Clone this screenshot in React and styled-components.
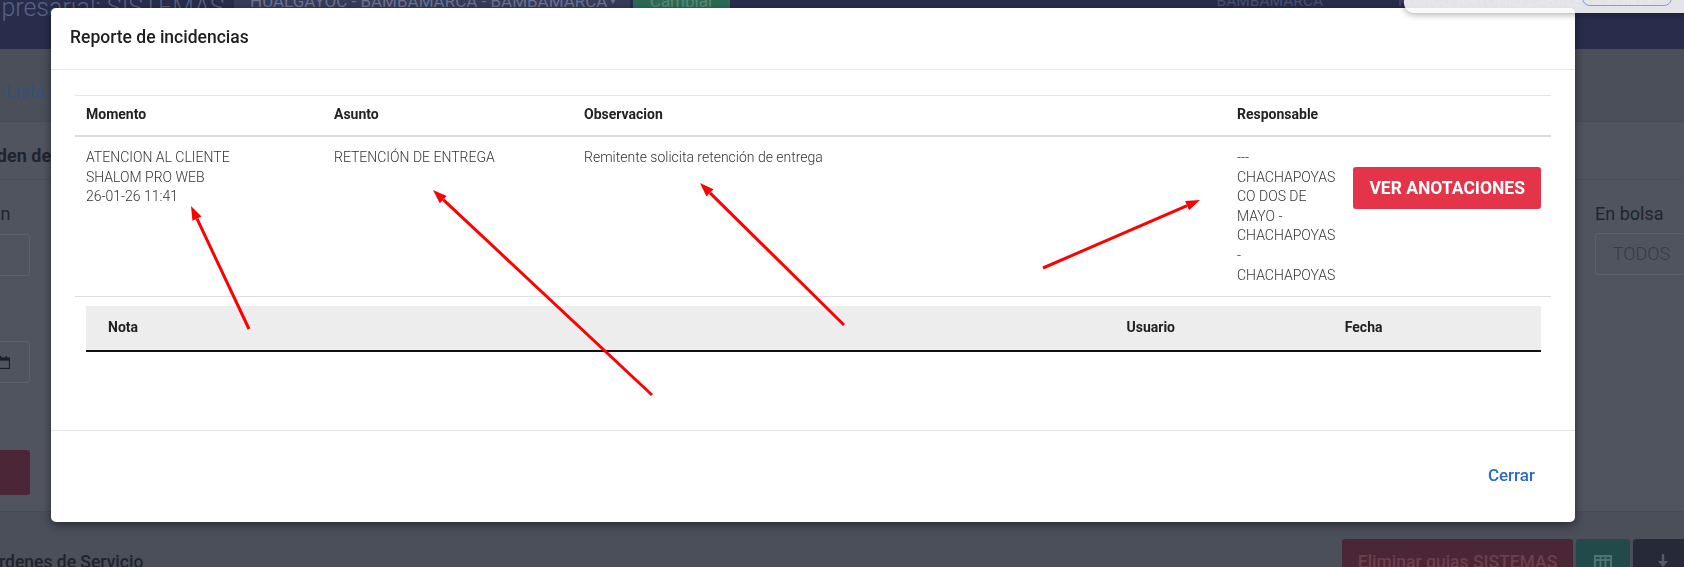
import styled, { createGlobalStyle } from "styled-components";

const GlobalStyle = createGlobalStyle`
    html, body {
        margin: 0;
        padding: 0;
        width: 1684px;
        height: 567px;
        overflow: hidden;
        background: #4b4f5a;
        font-family: Roboto, "Liberation Sans", sans-serif;
    }
    * { box-sizing: border-box; }
`

const arrows = [
    { x1: 249, y1: 329, x2: 191, y2: 206 },
    { x1: 652, y1: 395, x2: 433, y2: 190 },
    { x1: 844, y1: 325, x2: 700, y2: 183 },
    { x1: 1043, y1: 268, x2: 1200, y2: 200 },
];

function Arrow({ x1, y1, x2, y2 }) {
    const a = Math.atan2(y2 - y1, x2 - x1);
    const len = 14;
    const half = 5;
    const bx = x2 - len * Math.cos(a);
    const by = y2 - len * Math.sin(a);
    const px = -Math.sin(a) * half;
    const py = Math.cos(a) * half;
    return (
        <g>
            <line x1={x1} y1={y1} x2={bx} y2={by} stroke="#ff0000" strokeWidth="3" />
            <polygon points={`${x2},${y2} ${bx + px},${by + py} ${bx - px},${by - py}`} fill="#ff0000" />
        </g>
    )
}

export default function App() {
    return (
        <>
            <GlobalStyle />
            <Page>
                <Navbar>
                    <Brand>Empresarial: SISTEMAS</Brand>
                    <SedeSelect>HUALGAYOC - BAMBAMARCA - BAMBAMARCA <Caret>▼</Caret></SedeSelect>
                    <ChangeButton>Cambiar</ChangeButton>
                    <NavSpacer />
                    <NavItem $after={72}>BAMBAMARCA</NavItem>
                    <NavItem $after={29}>MARCO ANTONIO ZABALETA PONTE</NavItem>
                </Navbar>
                <Breadcrumb>Lista de Órdenes de Servicio</Breadcrumb>
                <FilterCard>
                    <CardTitle>Orden de Servicio</CardTitle>
                    <FilterRow $top={22}>
                        <LeftField>
                            <Label>Origen</Label>
                            <FakeInput />
                        </LeftField>
                        <RightField>
                            <Label>En bolsa</Label>
                            <FakeSelect>TODOS</FakeSelect>
                        </RightField>
                    </FilterRow>
                    <FilterRow $top={33}>
                        <LeftField>
                            <Label>Fin</Label>
                            <FakeInput>
                                <svg width="13" height="13" viewBox="0 0 13 13">
                                    <rect x="0.5" y="2" width="12" height="10.5" fill="none" stroke="#1c1f28" strokeWidth="1.2" />
                                    <rect x="0.5" y="2" width="12" height="2.6" fill="#1c1f28" />
                                    <rect x="3" y="0" width="1.4" height="3" fill="#1c1f28" />
                                    <rect x="8.6" y="0" width="1.4" height="3" fill="#1c1f28" />
                                </svg>
                            </FakeInput>
                        </LeftField>
                    </FilterRow>
                    <ButtonRow>
                        <SearchButton />
                    </ButtonRow>
                </FilterCard>
                <ListHeader>
                    <ListTitle>Órdenes de Servicio</ListTitle>
                    <ListActions>
                        <ActionButton $bg="#4a2636" $color="#6e3f4d" $width={231}>Eliminar guias SISTEMAS</ActionButton>
                        <ActionButton $bg="#224a4a" $color="#4f7472" $width={54}>
                            <svg width="18" height="14" viewBox="0 0 18 14">
                                <rect x="1" y="1" width="16" height="12" fill="none" stroke="#4f7472" strokeWidth="2" />
                                <line x1="1" y1="5" x2="17" y2="5" stroke="#4f7472" strokeWidth="2" />
                                <line x1="6.5" y1="1" x2="6.5" y2="13" stroke="#4f7472" strokeWidth="2" />
                                <line x1="11.5" y1="1" x2="11.5" y2="13" stroke="#4f7472" strokeWidth="2" />
                            </svg>
                        </ActionButton>
                        <ActionButton $bg="#262a38" $color="#555a6a" $width={60}>
                            <svg width="14" height="16" viewBox="0 0 14 16">
                                <line x1="7" y1="0" x2="7" y2="11" stroke="#555a6a" strokeWidth="2.4" />
                                <polygon points="2,7 12,7 7,13" fill="#555a6a" />
                            </svg>
                        </ActionButton>
                    </ListActions>
                </ListHeader>
            </Page>

            <UserMenu>
                <UserPill />
            </UserMenu>

            <Modal>
                <ModalHeader>
                    <ModalTitle>Reporte de incidencias</ModalTitle>
                </ModalHeader>
                <ModalBody>
                    <Table>
                        <colgroup>
                            <col style={{ width: 248 }} />
                            <col style={{ width: 250 }} />
                            <col style={{ width: 653 }} />
                            <col style={{ width: 122 }} />
                            <col />
                        </colgroup>
                        <thead>
                            <tr>
                                <Th>Momento</Th>
                                <Th>Asunto</Th>
                                <Th>Observacion</Th>
                                <Th>Responsable</Th>
                                <Th></Th>
                            </tr>
                        </thead>
                        <tbody>
                            <tr>
                                <Td>
                                    ATENCION AL CLIENTE<br />
                                    SHALOM PRO WEB<br />
                                    26-01-26 11:41
                                </Td>
                                <Td>RETENCIÓN DE ENTREGA</Td>
                                <Td>Remitente solicita retención de entrega</Td>
                                <Td>--- CHACHAPOYAS CO DOS DE MAYO - CHACHAPOYAS - CHACHAPOYAS</Td>
                                <ButtonCell>
                                    <NotesButton>VER ANOTACIONES</NotesButton>
                                </ButtonCell>
                            </tr>
                            <tr>
                                <NestedCell colSpan={5}>
                                    <NotesTable>
                                        <colgroup>
                                            <col />
                                            <col style={{ width: "15%" }} />
                                            <col style={{ width: "15%" }} />
                                        </colgroup>
                                        <thead>
                                            <tr>
                                                <NotesTh>Nota</NotesTh>
                                                <NotesTh>Usuario</NotesTh>
                                                <NotesTh>Fecha</NotesTh>
                                            </tr>
                                        </thead>
                                    </NotesTable>
                                </NestedCell>
                            </tr>
                        </tbody>
                    </Table>
                </ModalBody>
                <ModalFooter>
                    <CloseButton>Cerrar</CloseButton>
                </ModalFooter>
            </Modal>

            <Annotations viewBox="0 0 1684 567">
                {arrows.map((a, i) => <Arrow key={i} {...a} />)}
            </Annotations>
        </>
    )
}

const Page = styled.div`
    width: 1684px;
    height: 567px;
    overflow: hidden;
`

const Navbar = styled.div`
    height: 49px;
    background: #272d4b;
    display: flex;
    align-items: flex-start;
    gap: 3px;
    overflow: hidden;
`

const Brand = styled.div`
    flex: 0 0 266px;
    margin-top: -7px;
    margin-left: -35px;
    font-size: 25px;
    font-weight: 300;
    line-height: 30px;
    color: #5a6285;
    white-space: nowrap;
    overflow: hidden;
`

const SedeSelect = styled.div`
    margin-top: -14px;
    flex: 0 0 394px;
    height: 30px;
    padding: 0 12px 0 16px;
    background: #363c5a;
    color: #6d7393;
    font-size: 17px;
    line-height: 30px;
    display: flex;
    justify-content: space-between;
    white-space: nowrap;
`

const Caret = styled.span`
    font-size: 11px;
`

const ChangeButton = styled.div`
    margin-top: -14px;
    flex: 0 0 97px;
    height: 30px;
    background: #2d6a55;
    color: #5b8a79;
    font-size: 17px;
    line-height: 30px;
    text-align: center;
`

const NavSpacer = styled.div`
    flex: 1;
`

const NavItem = styled.div`
    margin-top: -11px;
    margin-right: ${p => p.$after}px;
    font-size: 15.5px;
    line-height: 24px;
    color: #4b5172;
    white-space: nowrap;
`

const UserMenu = styled.div`
    position: fixed;
    top: -10px;
    left: 1404px;
    width: 300px;
    height: 23px;
    border-radius: 10px;
    background: rgba(248, 248, 250, 0.9);
    box-shadow: 0 2px 6px rgba(0, 0, 0, 0.3);
    z-index: 30;
`

const UserPill = styled.div`
    position: absolute;
    left: 178px;
    top: 0;
    width: 90px;
    height: 16px;
    border: 1.5px solid #7b9ee0;
    border-radius: 8px;
`

const Breadcrumb = styled.div`
    height: 73px;
    padding: 31px 0 0 6px;
    font-size: 18px;
    line-height: 24px;
    color: #35507a;
    border-bottom: 1px solid #474b56;
    white-space: nowrap;
`

const FilterCard = styled.div`
    background: #50545f;
    border-bottom: 1px solid #474b56;
`

const CardTitle = styled.div`
    margin-left: -22px;
    padding: 23px 0 12px;
    font-size: 18px;
    font-weight: 700;
    line-height: 22px;
    color: #1f232d;
    border-bottom: 1px solid #4a4e59;
    white-space: nowrap;
`

const FilterRow = styled.div`
    display: flex;
    justify-content: space-between;
    padding-top: ${p => p.$top}px;
`

const LeftField = styled.div`
    width: 72px;
    margin-left: -42px;
    display: flex;
    flex-direction: column;
    gap: 8px;
`

const RightField = styled.div`
    width: 93px;
    margin-right: -4px;
    display: flex;
    flex-direction: column;
    gap: 7px;
`

const Label = styled.div`
    font-size: 18px;
    line-height: 24px;
    color: #20242e;
    white-space: nowrap;
`

const FakeInput = styled.div`
    height: 42px;
    border: 1px solid #5c606b;
    border-radius: 3px;
    display: flex;
    align-items: center;
    justify-content: flex-end;
    padding-right: 19px;
`

const FakeSelect = styled.div`
    height: 42px;
    border: 1px solid #5c606b;
    border-radius: 3px;
    font-size: 18px;
    font-weight: 300;
    line-height: 40px;
    text-align: center;
    color: #363a45;
`

const ButtonRow = styled.div`
    padding: 67px 0 16px;
`

const SearchButton = styled.div`
    width: 72px;
    height: 45px;
    margin-left: -42px;
    background: #4a2636;
    border-radius: 3px;
`

const ListHeader = styled.div`
    display: flex;
    justify-content: space-between;
    align-items: center;
    padding-top: 27px;
`

const ListTitle = styled.div`
    margin-left: -13px;
    font-size: 17.5px;
    font-weight: 500;
    color: #1f232d;
    white-space: nowrap;
`

const ListActions = styled.div`
    display: flex;
    gap: 3px;
    margin-right: -9px;
`

const ActionButton = styled.div`
    width: ${p => p.$width}px;
    height: 45px;
    background: ${p => p.$bg};
    color: ${p => p.$color};
    border-radius: 3px;
    font-size: 17.5px;
    font-weight: 500;
    display: flex;
    align-items: center;
    justify-content: center;
    white-space: nowrap;
`

const Modal = styled.div`
    position: fixed;
    top: 8px;
    left: 51px;
    width: 1524px;
    background: #ffffff;
    border-radius: 5px;
    box-shadow: 0 3px 10px rgba(0, 0, 0, 0.45);
    z-index: 10;
    color: #212529;
`

const ModalHeader = styled.div`
    padding: 17px 19px 20px;
    border-bottom: 1px solid #e6e6e6;
`

const ModalTitle = styled.div`
    font-size: 17.5px;
    font-weight: 500;
    line-height: 24px;
    color: #1e1e1e;
`

const ModalBody = styled.div`
    padding: 25px 24px 24px;
`

const Table = styled.table`
    width: 100%;
    table-layout: fixed;
    border-collapse: collapse;
    margin-bottom: 44px;
`

const Th = styled.th`
    padding: 9px 11px 10px;
    text-align: left;
    font-size: 14px;
    font-weight: 700;
    line-height: 19.6px;
    color: #222;
    border-top: 1px solid #e3e3ea;
    border-bottom: 2px solid #dcdcdc;
`

const Td = styled.td`
    padding: 11.5px 11px 11px;
    vertical-align: top;
    text-align: left;
    font-size: 14px;
    font-weight: 300;
    line-height: 19.6px;
    color: #333;
    border-bottom: 1px solid #dedede;
`

const ButtonCell = styled(Td)`
    padding-left: 0;
    padding-right: 10px;
    text-align: right;
    white-space: nowrap;
`

const NotesButton = styled.button`
    margin-top: 19px;
    padding: 11px 16px 10px;
    border: none;
    border-radius: 3px;
    background: #e3344a;
    color: #ffffff;
    font-family: Roboto, "Liberation Sans", sans-serif;
    font-size: 17.5px;
    font-weight: 700;
    line-height: 21px;
    white-space: nowrap;
    cursor: pointer;
`

const NestedCell = styled.td`
    padding: 9px 10px 10px 11px;
`

const NotesTable = styled.table`
    width: 100%;
    table-layout: fixed;
    border-collapse: collapse;
`

const NotesTh = styled.th`
    padding: 12px 22px;
    text-align: left;
    background: #ededed;
    font-size: 14px;
    font-weight: 700;
    line-height: 19.6px;
    color: #222;
    border-bottom: 2px solid #111;
`

const ModalFooter = styled.div`
    display: flex;
    justify-content: flex-end;
    padding: 24px 24px 27px;
    border-top: 1px solid #e6e6e6;
`

const CloseButton = styled.button`
    padding: 10px 16px;
    border: none;
    background: none;
    color: #2b6bc5;
    font-family: Roboto, "Liberation Sans", sans-serif;
    font-size: 17px;
    font-weight: 500;
    line-height: 20px;
    cursor: pointer;
`

const Annotations = styled.svg`
    position: fixed;
    top: 0;
    left: 0;
    width: 1684px;
    height: 567px;
    pointer-events: none;
    z-index: 20;
`
